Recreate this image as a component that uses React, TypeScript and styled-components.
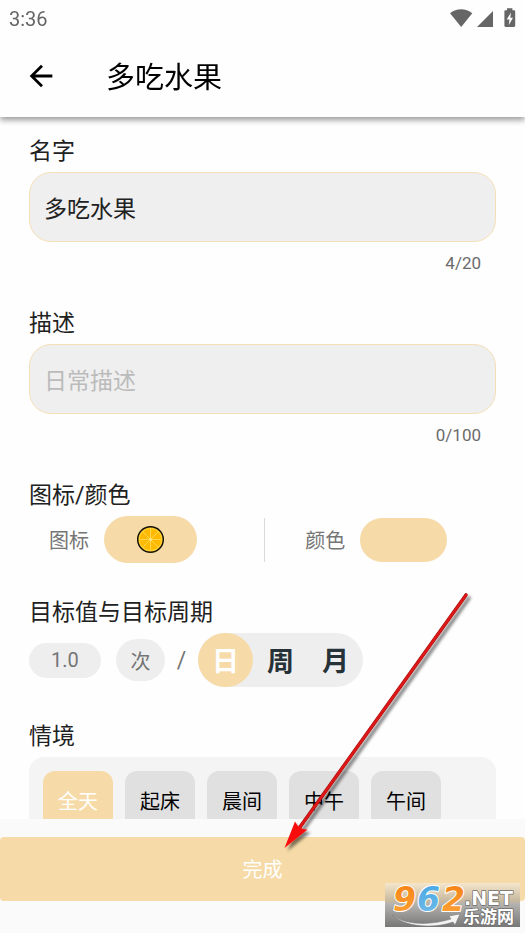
import React, { useState } from "react";
import styled, { createGlobalStyle } from "styled-components";

const accent = "#f6dba8";

const GlobalStyle = createGlobalStyle`
  *, *::before, *::after { box-sizing: border-box; }
  body {
    margin: 0;
    background: #fafafa;
    font-family: Roboto, "Noto Sans CJK SC", sans-serif;
    color: #212121;
  }
  button, input { font-family: inherit; }
`;

const Page = styled.div`
  position: relative;
  display: flex;
  flex-direction: column;
  height: 100vh;
  overflow: hidden;
`;

const Header = styled.header`
  position: relative;
  z-index: 1;
  flex: none;
  background: #fefefe;
  box-shadow: 0 3px 6px rgba(0, 0, 0, 0.4);
`;

const StatusBar = styled.div`
  display: flex;
  align-items: center;
  justify-content: space-between;
  height: 37px;
  padding: 0 9px;
  font-size: 20px;
  color: #666;
`;

const StatusIcons = styled.div`
  display: flex;
  align-items: center;
  padding-bottom: 2px;
`;

const AppBar = styled.div`
  display: flex;
  align-items: center;
  gap: 48px;
  height: 80px;
  padding-left: 24px;
`;

const BackButton = styled.button`
  display: flex;
  padding: 0 0 2px;
  border: 0;
  background: none;
  color: #000;
  cursor: pointer;
`;

const Title = styled.h1`
  margin: 0;
  padding-top: 2px;
  font-size: 29px;
  font-weight: 400;
  line-height: 40px;
  color: #000;
`;

const Content = styled.main`
  flex: 1;
  min-height: 0;
  padding: 18px 29px 0;
  overflow-y: auto;
  background: #fefefe;
  scrollbar-width: none;
`;

const Section = styled.section`
  margin-bottom: 33px;
`;

const Caption = styled.label`
  display: block;
  margin: 0 0 3px;
  font-size: 23px;
  font-weight: 400;
  line-height: 34px;
`;

const TextInput = styled.input`
  display: block;
  width: 100%;
  height: 70px;
  padding: 0 14px;
  border: 1px solid #f5dfb8;
  border-radius: 22px;
  outline: 0;
  background: #efefef;
  font-size: 23px;
  color: #212121;
  &::placeholder { color: #bbb; opacity: 1; }
  &:placeholder-shown { padding-top: 4px; }
`;

const Counter = styled.div`
  margin-top: 11px;
  padding-right: 15px;
  font-size: 17px;
  line-height: 21px;
  text-align: right;
  color: #6b6b6b;
`;

const PickerRow = styled.div`
  display: grid;
  grid-template-columns: 51fr 1px 50fr;
  align-items: center;
`;

const Picker = styled.div<{ $inset: number }>`
  display: flex;
  align-items: center;
  gap: 15px;
  padding-left: ${(p) => p.$inset}px;
  font-size: 20px;
  color: #757575;
`;

const Divider = styled.div`
  height: 44px;
  background: #d8d8d8;
`;

const Swatch = styled.button<{ $width: number; $height: number }>`
  display: flex;
  align-items: center;
  justify-content: center;
  width: ${(p) => p.$width}px;
  height: ${(p) => p.$height}px;
  padding: 0;
  border: 0;
  border-radius: 24px;
  background: ${accent};
  cursor: pointer;
`;

const GoalRow = styled.div`
  display: flex;
  align-items: center;
  font-size: 20px;
  color: #757575;
`;

const GoalValue = styled.input`
  width: 72px;
  height: 35px;
  margin-right: 15px;
  padding: 0;
  border: 0;
  border-radius: 18px;
  background: #eee;
  font-size: 20px;
  text-align: center;
  color: #757575;
`;

const UnitButton = styled.button`
  width: 49px;
  height: 42px;
  padding: 0;
  border: 0;
  border-radius: 22px;
  background: #eee;
  font-size: 20px;
  color: #757575;
`;

const Slash = styled.span`
  width: 33px;
  font-size: 23px;
  text-align: center;
`;

const PeriodGroup = styled.div`
  display: flex;
  border-radius: 27px;
  background: #eee;
`;

const PeriodOption = styled.label`
  position: relative;
  cursor: pointer;
`;

const PeriodRadio = styled.input`
  position: absolute;
  inset: 0;
  margin: 0;
  opacity: 0;
`;

const PeriodText = styled.span<{ $active: boolean }>`
  display: block;
  width: 55px;
  padding-top: 4px;
  border-radius: 28px;
  background: ${(p) => (p.$active ? accent : "transparent")};
  font-size: 27px;
  font-weight: 700;
  line-height: 50px;
  text-align: center;
  color: ${(p) => (p.$active ? "#fff" : "#263238")};
`;

const ScenePanel = styled.div`
  display: flex;
  flex-wrap: wrap;
  gap: 12px;
  padding: 14px;
  border-radius: 15px;
  background: #f4f4f4;
`;

const SceneChip = styled.button<{ $active: boolean }>`
  width: 70px;
  height: 58px;
  padding: 0;
  border: 0;
  border-radius: 12px;
  background: ${(p) => (p.$active ? accent : "#e0e0e0")};
  font-size: 20px;
  color: ${(p) => (p.$active ? "#fff" : "#000")};
  cursor: pointer;
`;

const Footer = styled.footer`
  flex: none;
  padding: 18px 0 32px;
  background: #fafafa;
`;

const DoneButton = styled.button`
  display: block;
  width: 100%;
  height: 64px;
  padding: 0 0 2px;
  border: 0;
  border-radius: 4px;
  background: ${accent};
  font-size: 20px;
  color: #fff;
  cursor: pointer;
`;

const Pointer = styled.svg`
  position: absolute;
  z-index: 2;
  left: 274px;
  top: 585px;
  pointer-events: none;
`;

const Watermark = styled.svg`
  position: absolute;
  z-index: 2;
  right: 5px;
  bottom: 6px;
  pointer-events: none;
`;

const SystemIcons = () => (
  <StatusIcons>
    <svg width="66" height="22" viewBox="0 0 66 22" fill="#666" aria-hidden="true">
      <path d="M0 6.2C6.5.9 15.7.9 22.3 6.2L11.2 20Z" />
      <path d="M27 20 43 4V20Z" />
      <path
        fillRule="evenodd"
        d="M57 1.2h5.4v2H64c.7 0 1.2.5 1.2 1.2v14.4c0 .7-.5 1.2-1.2 1.2h-8.400c-.7 0-1.200-.5-1.200-1.200V4.400c0-.7.5-1.200 1.200-1.200H57ZM61 5.500 56.700 12.600h2.700L58.800 18 63 10.800h-2.700Z"
      />
    </svg>
  </StatusIcons>
);

const OrangeIcon = () => (
  <svg width="28" height="28" viewBox="0 0 28 28" aria-hidden="true">
    <circle cx="13.500" cy="13.500" r="12.8" fill="#ffd02e" stroke="#17130a" strokeWidth="1.5" />
    <circle cx="13.500" cy="13.500" r="10.600" fill="#ffb900" />
    <path
      d="M13.500 3v21M3 13.500h21M6 6l15 15M21 6 6 21"
      stroke="#ffd84f"
      strokeWidth="1"
    />
    <circle cx="13.500" cy="13.500" r="1.500" fill="#ffe27a" />
  </svg>
);

const ArrowPointer = () => (
  <Pointer width="204" height="274" viewBox="0 0 204 274" aria-hidden="true">
    <defs>
      <filter id="arrowShadow" x="-10%" y="-10%" width="120%" height="120%">
        <feDropShadow dx="3" dy="3" stdDeviation="1.8" floodColor="#000" floodOpacity="0.5" />
      </filter>
    </defs>
    <g filter="url(#arrowShadow)">
      <path d="M192 10 26 242" stroke="#a51212" strokeWidth="3.600" strokeLinecap="round" />
      <path d="M192 10 26 242" stroke="#e01818" strokeWidth="2.200" strokeLinecap="round" />
      <path d="M10.500 263 21 236.500 24 241 29 244 33.500 244.500Z" fill="#f80d0d" />
    </g>
  </Pointer>
);

const SiteMark = () => (
  <Watermark width="135" height="50" viewBox="0 -6 135 50" role="img" aria-label="962.NET 乐游网">
    <defs>
      <linearGradient id="markBg" x1="0" y1="0" x2="0" y2="1">
        <stop offset="0" stopColor="#f5e6cb" />
        <stop offset="0.42" stopColor="#c5b79d" />
        <stop offset="0.46" stopColor="#b7b5b1" />
        <stop offset="1" stopColor="#777" />
      </linearGradient>
      <linearGradient id="markOrange" x1="0" y1="0" x2="0" y2="1">
        <stop offset="0" stopColor="#f47f13" />
        <stop offset="1" stopColor="#ffa63a" />
      </linearGradient>
      <linearGradient id="markBlue" x1="0" y1="0" x2="0" y2="1">
        <stop offset="0" stopColor="#43a6e4" />
        <stop offset="1" stopColor="#75bde8" />
      </linearGradient>
    </defs>
    <rect width="135" height="44" fill="url(#markBg)" />
    <path
      d="M7 32C22 43 47 42 66 36L64 33 75 31 70 42 68 39C48 46 20 44 7 32Z"
      fill="#f4f4f4"
      stroke="#777"
      strokeWidth="0.500"
    />
    <g
      fontFamily="'DejaVu Sans', sans-serif"
      fontWeight="700"
      fontStyle="italic"
      fontSize="33"
      stroke="#fff"
      strokeWidth="2"
      strokeLinejoin="round"
      paintOrder="stroke"
    >
      <text x="8" y="28" fill="url(#markOrange)">9</text>
      <text x="32" y="28" fill="url(#markBlue)">6</text>
      <text x="57" y="28" fill="url(#markOrange)">2</text>
    </g>
    <g fill="#fff" stroke="#6e6e6e" strokeWidth="1.500" strokeLinejoin="round" paintOrder="stroke" fontWeight="700">
      <text x="79" y="22" fontFamily="'DejaVu Sans', sans-serif" fontSize="19">.NET</text>
      <text x="78" y="40" fontFamily="'Noto Sans CJK SC', sans-serif" fontSize="17">乐游网</text>
    </g>
  </Watermark>
);

const periods = ["日", "周", "月"];
const scenes = ["全天", "起床", "晨间", "中午", "午间"];

export default function App() {
  const [name, setName] = useState("多吃水果");
  const [description, setDescription] = useState("");
  const [goal, setGoal] = useState("1.0");
  const [period, setPeriod] = useState("日");
  const [scene, setScene] = useState("全天");

  return (
    <>
      <GlobalStyle />
      <Page>
        <Header>
          <StatusBar>
            <span>3:36</span>
            <SystemIcons />
          </StatusBar>
          <AppBar>
            <BackButton type="button" aria-label="返回">
              <svg width="34" height="34" viewBox="0 0 24 24" fill="currentColor" aria-hidden="true">
                <path d="M20 11H7.830l5.590-5.590L12 4l-8 8 8 8 1.410-1.410L7.830 13H20v-2z" />
              </svg>
            </BackButton>
            <Title>多吃水果</Title>
          </AppBar>
        </Header>

        <Content>
          <Section>
            <Caption htmlFor="name">名字</Caption>
            <TextInput id="name" maxLength={20} value={name} onChange={(e) => setName(e.target.value)} />
            <Counter>{name.length}/20</Counter>
          </Section>

          <Section>
            <Caption htmlFor="description">描述</Caption>
            <TextInput
              id="description"
              maxLength={100}
              placeholder="日常描述"
              value={description}
              onChange={(e) => setDescription(e.target.value)}
            />
            <Counter>{description.length}/100</Counter>
          </Section>

          <Section>
            <Caption as="h2">图标/颜色</Caption>
            <PickerRow>
              <Picker $inset={20}>
                <span id="icon-label">图标</span>
                <Swatch type="button" $width={93} $height={47} aria-labelledby="icon-label">
                  <OrangeIcon />
                </Swatch>
              </Picker>
              <Divider />
              <Picker $inset={40}>
                <span id="color-label">颜色</span>
                <Swatch type="button" $width={87} $height={44} aria-labelledby="color-label" />
              </Picker>
            </PickerRow>
          </Section>

          <Section>
            <Caption htmlFor="goal">目标值与目标周期</Caption>
            <GoalRow>
              <GoalValue id="goal" value={goal} onChange={(e) => setGoal(e.target.value)} />
              <UnitButton type="button">次</UnitButton>
              <Slash>/</Slash>
              <PeriodGroup role="radiogroup" aria-label="目标周期">
                {periods.map((p) => (
                  <PeriodOption key={p}>
                    <PeriodRadio type="radio" name="period" checked={p === period} onChange={() => setPeriod(p)} />
                    <PeriodText $active={p === period}>{p}</PeriodText>
                  </PeriodOption>
                ))}
              </PeriodGroup>
            </GoalRow>
          </Section>

          <Section>
            <Caption as="h2">情境</Caption>
            <ScenePanel>
              {scenes.map((s) => (
                <SceneChip key={s} type="button" $active={s === scene} onClick={() => setScene(s)}>
                  {s}
                </SceneChip>
              ))}
            </ScenePanel>
          </Section>
        </Content>

        <Footer>
          <DoneButton type="button">完成</DoneButton>
        </Footer>

        <ArrowPointer />
        <SiteMark />
      </Page>
    </>
  );
}
